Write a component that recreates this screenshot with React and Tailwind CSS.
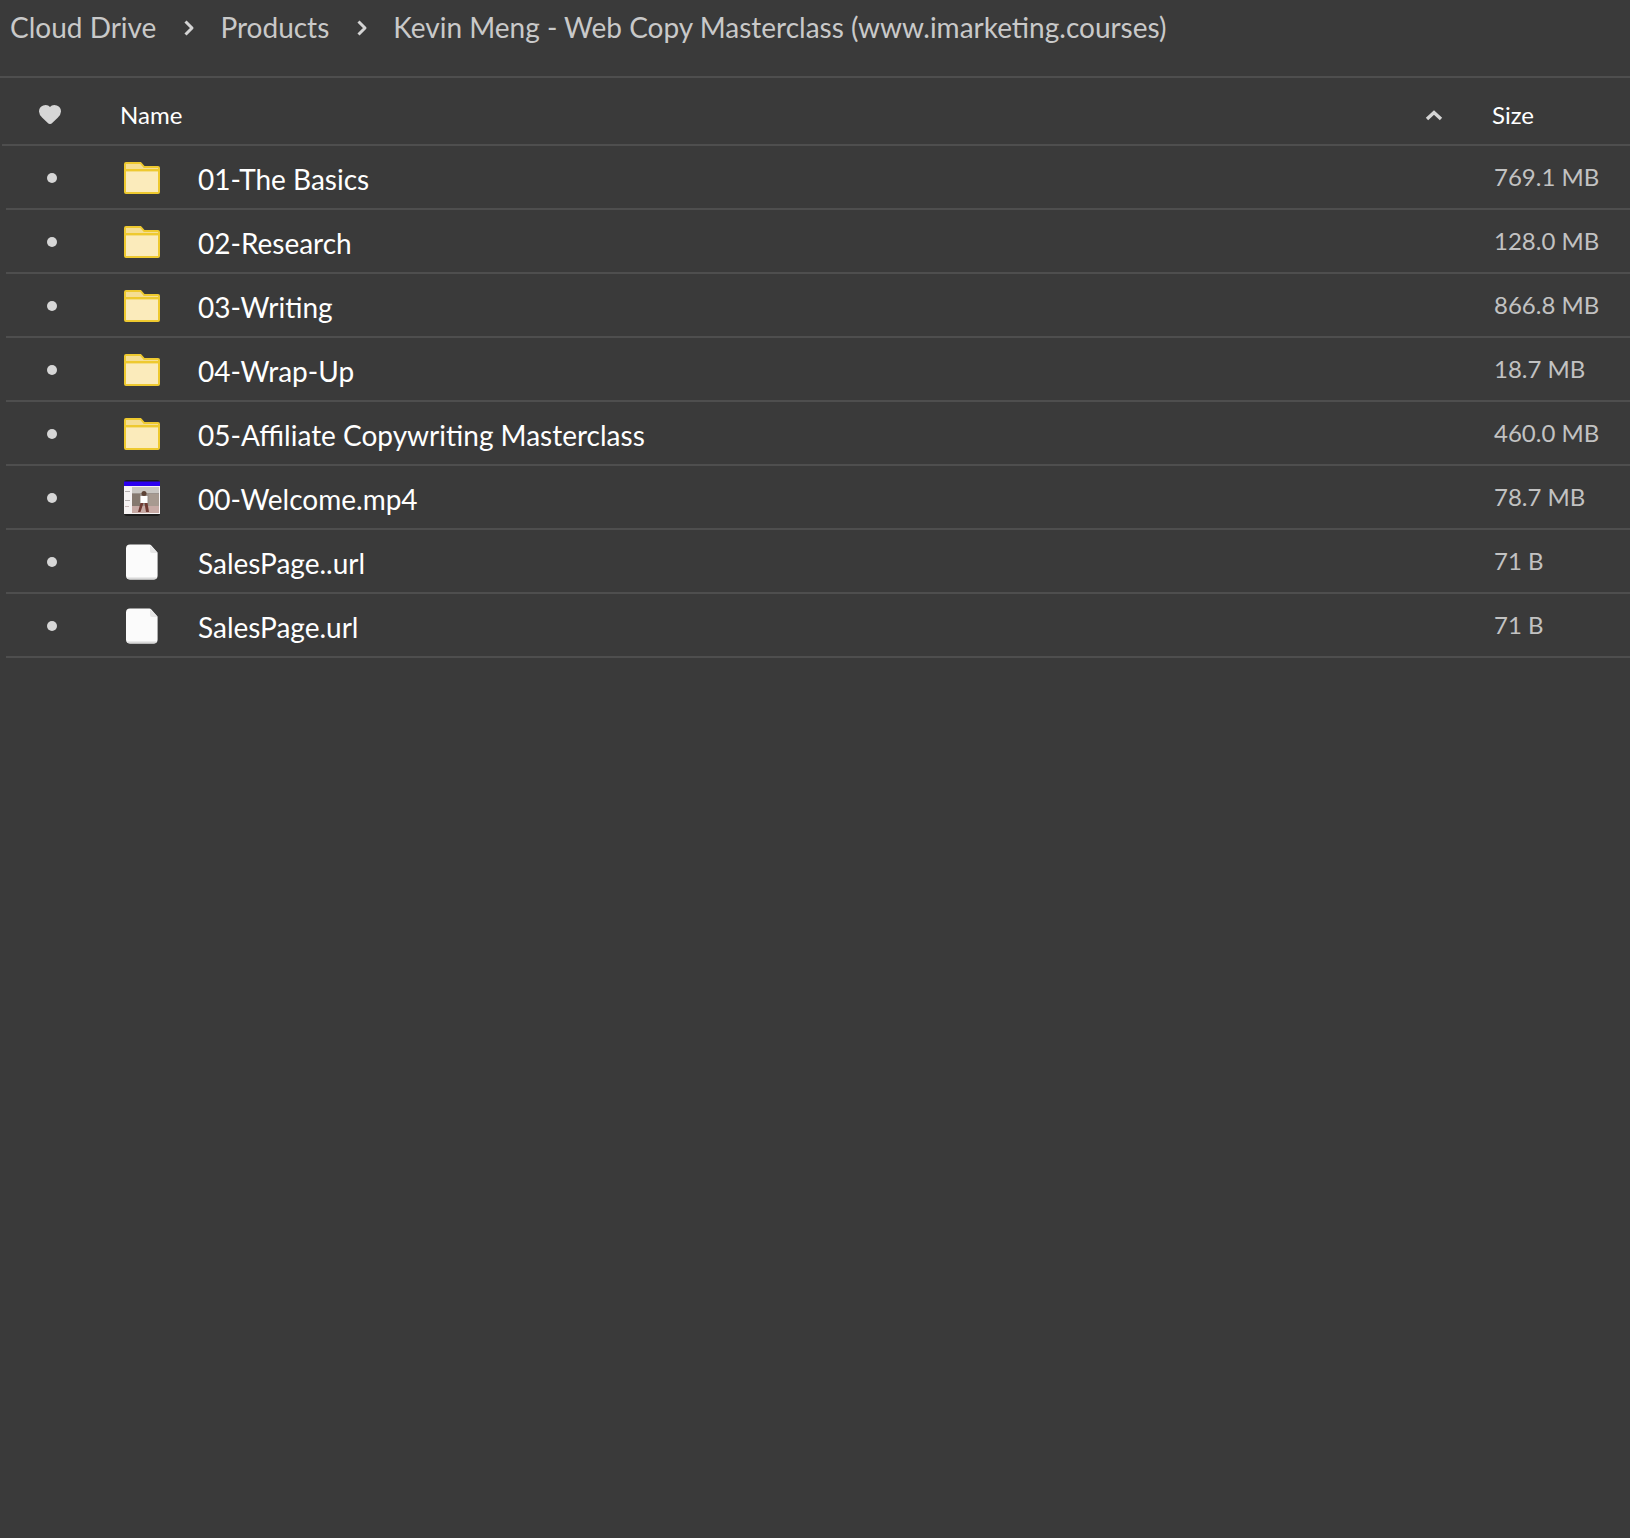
import { Heart } from 'lucide-react'

const items = [
  { name: '01-The Basics', size: '769.1 MB', type: 'folder' },
  { name: '02-Research', size: '128.0 MB', type: 'folder' },
  { name: '03-Writing', size: '866.8 MB', type: 'folder' },
  { name: '04-Wrap-Up', size: '18.7 MB', type: 'folder' },
  { name: '05-Affiliate Copywriting Masterclass', size: '460.0 MB', type: 'folder' },
  { name: '00-Welcome.mp4', size: '78.7 MB', type: 'video' },
  { name: 'SalesPage..url', size: '71 B', type: 'file' },
  { name: 'SalesPage.url', size: '71 B', type: 'file' },
]

function Chevron() {
  return (
    <svg width="14" height="18" viewBox="0 0 14 18" fill="none" className="shrink-0">
      <path d="M4.5 2.5 11 9l-6.5 6.5" stroke="#d4d4d4" strokeWidth="3" strokeLinejoin="round" />
    </svg>
  )
}

function FolderIcon() {
  return (
    <svg width="36" height="32" viewBox="0 0 36 32">
      <path d="M1 2a1 1 0 0 1 1-1h14.500l3.500 4h14a1 1 0 0 1 1 1v24a1 1 0 0 1-1 1H2a1 1 0 0 1-1-1z" fill="#fbebbb" stroke="#eec92f" strokeWidth="2" />
      <path d="M2 2h14l3.500 4H34v2H2z" fill="#f5de93" />
      <rect x="1" y="7" width="34" height="2.400" fill="#eec92f" />
    </svg>
  )
}

function FileIcon() {
  return (
    <svg width="32" height="36" viewBox="0 0 32 36">
      <path d="M4 .5h19.500a2 2 0 0 1 1.400.6l6.200 6.800a2 2 0 0 1 .5 1.300V31.500a4 4 0 0 1-4 4H4a4 4 0 0 1-4-4V4.500a4 4 0 0 1 4-4z" fill="#fbfbfb" />
      <path d="M1 33.500a4 4 0 0 0 3 2h24a4 4 0 0 0 3-2z" fill="#d8d8d8" />
      <path d="M24 1l7.500 8H26a2 2 0 0 1-2-2z" fill="#e6e6e6" />
    </svg>
  )
}

function VideoThumb() {
  return (
    <svg width="36" height="36" viewBox="0 0 36 36">
      <rect x="0" y="0" width="36" height="36" rx="3" fill="#1c1c1c" />
      <rect x="0" y="1.500" width="36" height="4.500" fill="#2b00f0" />
      <rect x="0" y="6" width="36" height="28" fill="#f6f3f3" />
      <rect x="8" y="7" width="27" height="26" fill="#9c938d" />
      <rect x="8" y="7" width="27" height="6" fill="#c9c6c2" />
      <rect x="8" y="14" width="8" height="12" fill="#85796f" />
      <rect x="25" y="14" width="10" height="12" fill="#a79a90" />
      <rect x="8" y="26" width="27" height="7" fill="#c7aaa5" />
      <circle cx="20" cy="13.500" r="2.500" fill="#5c4236" />
      <rect x="16.500" y="16" width="7" height="7" fill="#fff" />
      <path d="M16.500 23h3l-3 9h-2.500zM20.500 23h3l1.500 9h-3z" fill="#6f3a33" />
      <rect x="1" y="11" width="5" height="1" fill="#b5b0b0" />
      <rect x="1" y="20" width="5" height="1" fill="#b5b0b0" />
      <rect x="1" y="26" width="4" height="1" fill="#c8b8b8" />
    </svg>
  )
}

function ItemIcon({ type }) {
  if (type === 'folder') return <FolderIcon />
  if (type === 'video') return <VideoThumb />
  return <span className="pl-[2px]"><FileIcon /></span>
}

export default function App() {
  return (
    <div className="min-h-[1538px] bg-[#3a3a3a] font-['Lato','Inter',sans-serif]">
      <div className="flex h-[78px] items-start gap-[25px] border-b-2 border-[#4e4e4e] pl-[10px] pt-[7px] text-[28px] leading-[40px] text-[#c9c9c9]">
        <span>Cloud Drive</span>
        <span className="flex h-[42px] items-center"><Chevron /></span>
        <span>Products</span>
        <span className="flex h-[42px] items-center"><Chevron /></span>
        <span>Kevin Meng - Web Copy Masterclass (www.imarketing.courses)</span>
      </div>

      <div className="ml-[2px] flex h-[68px] items-center border-b-2 border-[#4e4e4e] pt-[8px] text-[24px] text-white">
        <div className="-mt-[2px] flex w-[118px] shrink-0 pl-[36px]">
          <Heart size={24} fill="#d6d6d6" stroke="#d6d6d6" />
        </div>
        <div className="flex-1">Name</div>
        <svg width="18" height="12" viewBox="0 0 18 12" fill="none" className="mr-[49px]">
          <path d="M2 10 9 3.500 16 10" stroke="#d4d4d4" strokeWidth="3.400" />
        </svg>
        <div className="w-[138px]">Size</div>
      </div>

      {items.map((item) => (
        <div key={item.name} className="ml-[6px] flex h-[64px] items-center border-b-2 border-[#4e4e4e]">
          <div className="flex w-[116px] shrink-0 pl-[41px] pt-[2px]">
            <span className="size-[10px] rounded-full bg-[#d6d6d6]" />
          </div>
          <div className="flex w-[76px] shrink-0 items-center pl-[2px] pt-[2px]"><ItemIcon type={item.type} /></div>
          <div className="flex-1 pt-[4px] text-[28px] text-white">{item.name}</div>
          <div className="w-[136px] text-[24px] text-[#c2c2c2]">{item.size}</div>
        </div>
      ))}
    </div>
  )
}
